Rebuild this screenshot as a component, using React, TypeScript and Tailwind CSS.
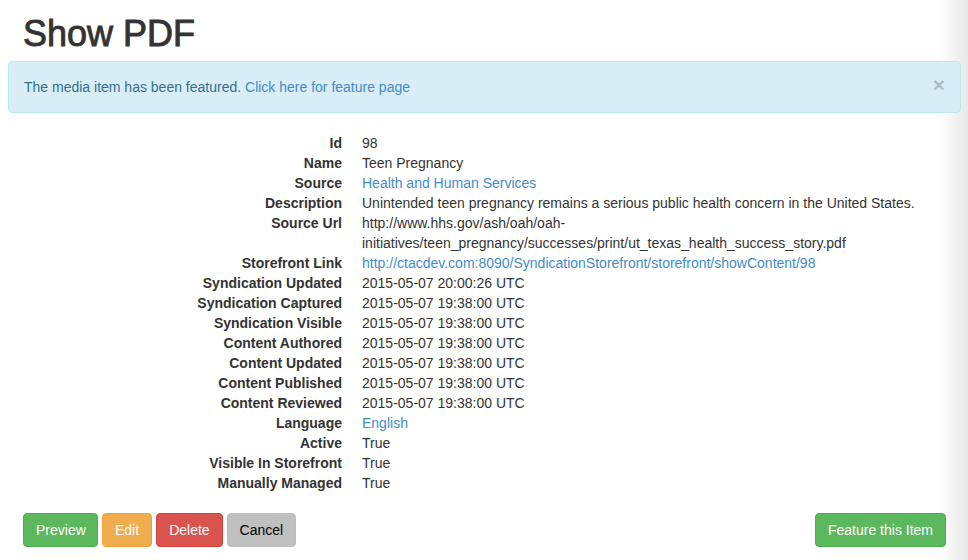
import React from 'react';

type Row = { label: string; value: string; link?: boolean };

const rows: Row[] = [
  { label: 'Id', value: '98' },
  { label: 'Name', value: 'Teen Pregnancy' },
  { label: 'Source', value: 'Health and Human Services', link: true },
  { label: 'Description', value: 'Unintended teen pregnancy remains a serious public health concern in the United States.' },
  {
    label: 'Source Url',
    value: 'http://www.hhs.gov/ash/oah/oah-initiatives/teen_pregnancy/successes/print/ut_texas_health_success_story.pdf',
  },
  { label: 'Storefront Link', value: 'http://ctacdev.com:8090/SyndicationStorefront/storefront/showContent/98', link: true },
  { label: 'Syndication Updated', value: '2015-05-07 20:00:26 UTC' },
  { label: 'Syndication Captured', value: '2015-05-07 19:38:00 UTC' },
  { label: 'Syndication Visible', value: '2015-05-07 19:38:00 UTC' },
  { label: 'Content Authored', value: '2015-05-07 19:38:00 UTC' },
  { label: 'Content Updated', value: '2015-05-07 19:38:00 UTC' },
  { label: 'Content Published', value: '2015-05-07 19:38:00 UTC' },
  { label: 'Content Reviewed', value: '2015-05-07 19:38:00 UTC' },
  { label: 'Language', value: 'English', link: true },
  { label: 'Active', value: 'True' },
  { label: 'Visible In Storefront', value: 'True' },
  { label: 'Manually Managed', value: 'True' },
];

const btn = 'rounded-[4px] border px-[12px] py-[6px] text-[14px] leading-[20px]';

export default function App() {
  return (
    <div
      className="min-h-screen bg-[linear-gradient(90deg,#ffffff_calc(100%-30px),#e8e8e8_100%)] px-[8px] pr-[7px] text-[14px] leading-[20px] text-[#333333]"
      style={{ fontFamily: '"Liberation Sans", Arial, Helvetica, sans-serif' }}
    >
      <h1 className="px-[15px] pt-[14px] pb-[7px] text-[36px] leading-[40px] font-normal text-[#333333] [-webkit-text-stroke:0.9px_#333333]">
        Show PDF
      </h1>

      <div className="mb-[20px] flex items-start justify-between rounded-[4px] border border-[#bce8f1] bg-[#d9edf7] px-[15px] py-[15px] text-[#31708f]">
        <p>
          The media item has been featured.{' '}
          <a className="text-[#428bca]">Click here for feature page</a>
        </p>
        <span className="-mt-[2px] text-[21px] leading-[20px] font-bold text-black opacity-20">×</span>
      </div>

      <dl className="ml-[174px] grid grid-cols-[160px_1fr] gap-x-[20px] pr-[15px]">
        {rows.map((r) => (
          <React.Fragment key={r.label}>
            <dt className="text-right font-bold">{r.label}</dt>
            <dd className={r.link ? 'text-[#428bca]' : ''}>{r.value}</dd>
          </React.Fragment>
        ))}
      </dl>

      <div className="mt-[20px] flex items-center justify-between px-[15px]">
        <div className="flex gap-[4px]">
          <button className={`${btn} w-[75px] border-[#4cae4c] bg-[#5cb85c] text-white`}>Preview</button>
          <button className={`${btn} border-[#eea236] bg-[#f0ad4e] text-white`}>Edit</button>
          <button className={`${btn} border-[#d43f3a] bg-[#d9534f] text-white`}>Delete</button>
          <button className={`${btn} border-[#bdbdbd] bg-[#c0c0c0] text-black`}>Cancel</button>
        </div>
        <button className={`${btn} border-[#4cae4c] bg-[#5cb85c] text-white`}>Feature this Item</button>
      </div>
    </div>
  );
}
